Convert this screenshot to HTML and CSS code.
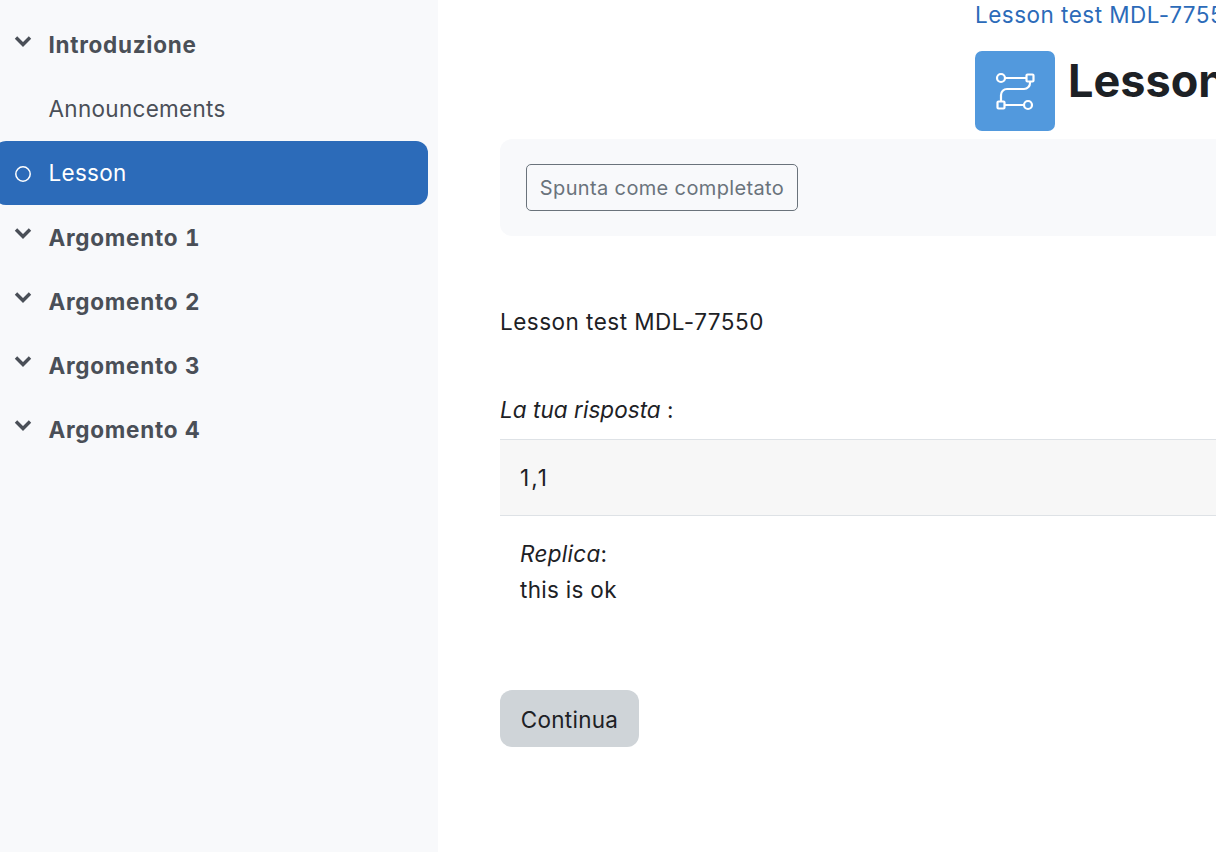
FILE: index.html
```html
<!DOCTYPE html>
<html lang="it">
<head>
<meta charset="utf-8">
<title>Lesson</title>
<link rel="stylesheet" href="styles.css">
</head>
<body>
<div class="page">
  <nav class="sidebar">
    <a class="item section"><svg class="chev" viewBox="0 0 18 12"><path d="M2 2.500 9 9.500l7-7"/></svg><span>Introduzione</span></a>
    <a class="item"><span class="slot"></span><span>Announcements</span></a>
    <a class="item active"><svg class="dot" viewBox="0 0 18 18"><circle cx="9" cy="9" r="7.200"/></svg><span>Lesson</span></a>
    <a class="item section"><svg class="chev" viewBox="0 0 18 12"><path d="M2 2.500 9 9.500l7-7"/></svg><span>Argomento 1</span></a>
    <a class="item section"><svg class="chev" viewBox="0 0 18 12"><path d="M2 2.500 9 9.500l7-7"/></svg><span>Argomento 2</span></a>
    <a class="item section"><svg class="chev" viewBox="0 0 18 12"><path d="M2 2.500 9 9.500l7-7"/></svg><span>Argomento 3</span></a>
    <a class="item section"><svg class="chev" viewBox="0 0 18 12"><path d="M2 2.500 9 9.500l7-7"/></svg><span>Argomento 4</span></a>
  </nav>
  <main class="main">
    <header class="head">
      <a class="crumb">Lesson test MDL-77550</a>
      <div class="title">
        <div class="icon">
          <svg viewBox="0 0 40 40" class="glyph">
            <circle cx="6" cy="7" r="4"/>
            <rect x="31.500" y="3.500" width="7" height="7" rx="1"/>
            <rect x="2.500" y="30.500" width="7" height="7" rx="1"/>
            <circle cx="33" cy="34" r="4"/>
            <path d="M10 7h21.500M9.500 34H29M35 10.500v1a6 6 0 0 1-6 6.500H12a6 6 0 0 0-6 6v6.500"/>
          </svg>
        </div>
        <h1>Lesson</h1>
      </div>
    </header>
    <section class="activity"><button class="mark">Spunta come completato</button></section>
    <p class="intro">Lesson test MDL-77550</p>
    <p class="label"><em>La tua risposta</em> :</p>
    <div class="answer">1,1</div>
    <div class="reply"><em>Replica</em>:<br>this is ok</div>
    <button class="next">Continua</button>
  </main>
</div>
</body>
</html>
```
FILE: styles.css
```css
* { box-sizing: border-box; }
html, body { margin: 0; height: 100%; overflow: hidden; background: #fff; }
body { font-family: Inter, "Liberation Sans", sans-serif; font-size: 22.500px; line-height: 36px; color: #1d2125; letter-spacing: 0.300px; }
.page { display: flex; width: 1216px; height: 852px; overflow: hidden; }
.sidebar { flex: 0 0 438px; background: #f8f9fb; padding: 13px 10px 0 0; display: flex; flex-direction: column; }
.item { height: 64px; flex: none; display: flex; align-items: center; color: #4a4f57; padding-left: 14px; border-radius: 0 12px 12px 0; }
.section { font-weight: 700; letter-spacing: 0.720px; font-variant-numeric: tabular-nums; }
.section span { padding-top: 1px; }
.section:first-child span { padding-top: 0; }
.slot { width: 18px; }
.item > span:last-child { margin-left: 16.500px; }
.chev { width: 18px; height: 12px; margin-top: -8px; fill: none; stroke: #4a4f57; stroke-width: 3.400; }
.dot { width: 18px; height: 18px; margin-top: 1px; fill: none; stroke: #fff; stroke-width: 1.500; }
.active { background: #2c6bb9; color: #fff; border-radius: 12px; margin-left: -6px; padding-left: 20px; }
.main { flex: 1 0 778px; min-width: 0; padding-left: 62px; }
.head { margin-left: 475px; width: 400px; height: 139px; }
.crumb { display: block; color: #2c6bb9; height: 51px; line-height: 30px; letter-spacing: 0.480px; white-space: nowrap; }
.title { display: flex; align-items: flex-start; }
.icon { width: 80px; height: 80px; border-radius: 7px; background: #5299dd; display: flex; align-items: center; justify-content: center; flex: none; }
.glyph { width: 40px; height: 40px; fill: none; stroke: #fff; stroke-width: 2.200; }
h1 { margin: 0 0 0 13px; font-size: 45px; line-height: 60px; font-weight: 700; letter-spacing: 0; white-space: nowrap; }
.activity { width: 800px; height: 97px; background: #f8f9fb; border-radius: 12px 0 0 12px; padding: 25px 26px; }
.mark { display: block; height: 47px; width: 272px; padding: 0; background: transparent; border: 1px solid #6a737b; border-radius: 5px; font: inherit; font-size: 20px; letter-spacing: 0.360px; color: #6a737b; }
.intro { margin: 68px 0 0; letter-spacing: 0.480px; }
.label { margin: 52px 0 0; height: 47px; letter-spacing: 0.050px; }
.answer { width: 800px; height: 77px; border-top: 1px solid #dee2e6; border-bottom: 1px solid #dee2e6; background: #f7f7f7; padding: 20px 20px 0; letter-spacing: 2px; }
.reply { padding: 20px 20px 0; height: 174px; }
.next { display: block; width: 139px; height: 57px; padding: 2px 0 0; border: 0; border-radius: 12px; background: #cfd4d8; color: #1d2125; font: inherit; letter-spacing: 0.250px; }
```
